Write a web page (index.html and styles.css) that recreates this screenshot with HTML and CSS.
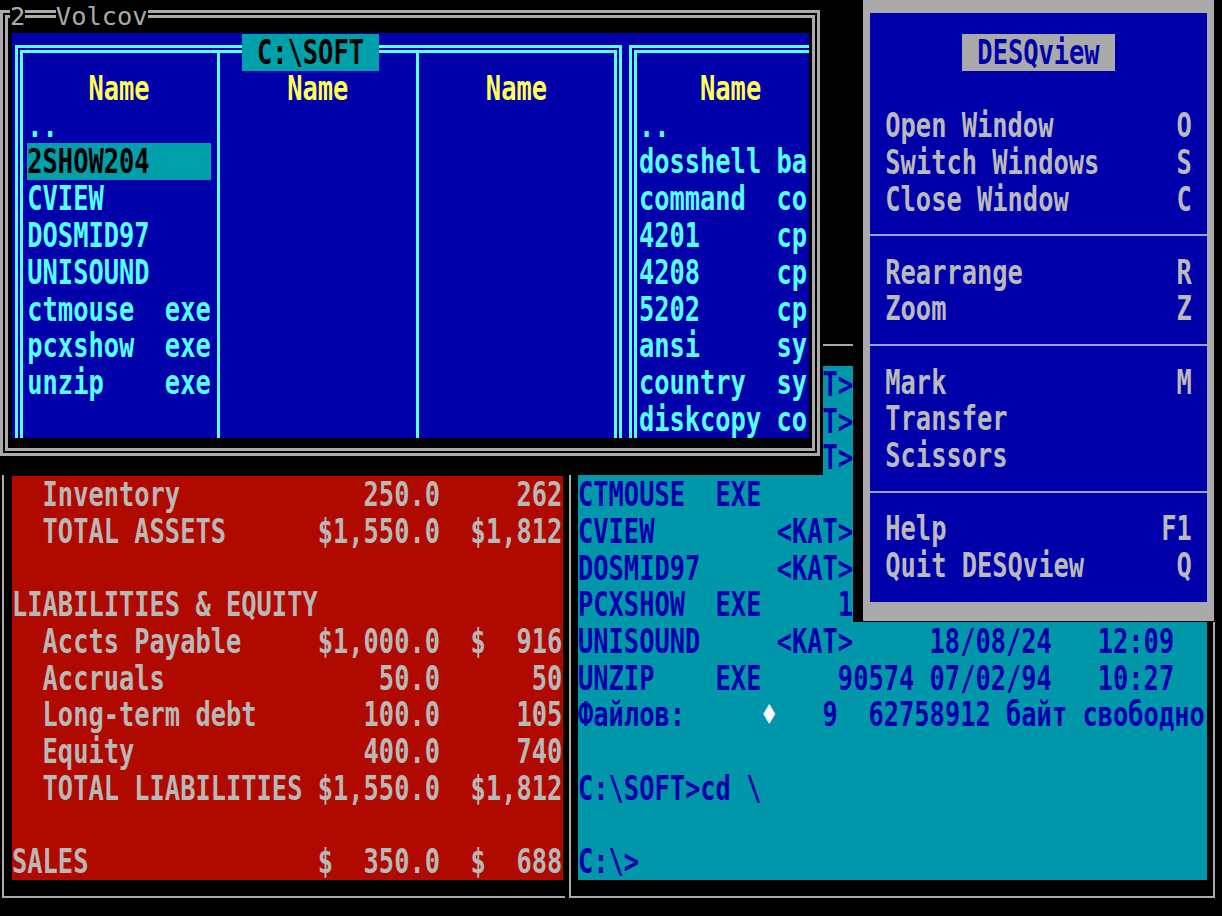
FILE: index.html
```html
<!DOCTYPE html>
<html lang="ru">
<head>
<meta charset="utf-8">
<title>DESQview</title>
<link rel="stylesheet" href="styles.css">
</head>
<body>
<div class="screen">

  <section class="win sheet">
    <div class="frame">
      <div class="pane">
        <div class="r">  Inventory            250.0     262</div>
        <div class="r">  TOTAL ASSETS      $1,550.0  $1,812</div>
        <div class="r"></div>
        <div class="r">LIABILITIES &amp; EQUITY</div>
        <div class="r">  Accts Payable     $1,000.0  $  916</div>
        <div class="r">  Accruals              50.0      50</div>
        <div class="r">  Long-term debt       100.0     105</div>
        <div class="r">  Equity               400.0     740</div>
        <div class="r">  TOTAL LIABILITIES $1,550.0  $1,812</div>
        <div class="r"></div>
        <div class="r">SALES               $  350.0  $  688</div>
      </div>
    </div>
  </section>

  <section class="win dos">
    <div class="frame">
      <div class="pane">
        <div class="r ind">T&gt;</div>
        <div class="r ind">T&gt;</div>
        <div class="r ind">T&gt;</div>
        <div class="r">CTMOUSE  EXE</div>
        <div class="r">CVIEW        &lt;КАТ&gt;</div>
        <div class="r">DOSMID97     &lt;КАТ&gt;</div>
        <div class="r">PCXSHOW  EXE     1</div>
        <div class="r">UNISOUND     &lt;КАТ&gt;     18/08/24   12:09</div>
        <div class="r">UNZIP    EXE     90574 07/02/94   10:27</div>
        <div class="r">Файлов:     <span class="ptr">♦</span>   9  62758912 байт свободно</div>
        <div class="r"></div>
        <div class="r">C:\SOFT&gt;cd \</div>
        <div class="r"></div>
        <div class="r">C:\&gt;</div>
      </div>
    </div>
  </section>

  <section class="win vc">
    <div class="frame">
      <div class="pane">
        <div class="panel left">
          <div class="label"><div class="r">C:\SOFT</div></div>
          <div class="col">
            <div class="r head">    Name</div>
            <div class="r">..</div>
            <div class="sel"><div class="r">2SHOW204</div></div>
            <div class="r">CVIEW</div>
            <div class="r">DOSMID97</div>
            <div class="r">UNISOUND</div>
            <div class="r">ctmouse  exe</div>
            <div class="r">pcxshow  exe</div>
            <div class="r">unzip    exe</div>
          </div>
          <div class="sep"></div>
          <div class="col">
            <div class="r head">    Name</div>
          </div>
          <div class="sep"></div>
          <div class="col">
            <div class="r head">    Name</div>
          </div>
        </div>
        <div class="panel right">
          <div class="r head">    Name</div>
          <div class="r">..</div>
          <div class="r">dosshell ba</div>
          <div class="r">command  co</div>
          <div class="r">4201     cp</div>
          <div class="r">4208     cp</div>
          <div class="r">5202     cp</div>
          <div class="r">ansi     sy</div>
          <div class="r">country  sy</div>
          <div class="r">diskcopy co</div>
        </div>
      </div>
    </div>
    <div class="title"><span>2</span><span class="gap"></span><span>Volcov</span></div>
  </section>

  <section class="win menu">
    <div class="menu-frame">
      <div class="menu-body">
        <div class="mtitle"><div class="box"><div class="r">DESQview</div></div></div>
        <div class="blank"></div>
        <div class="r item"><span>Open Window</span><span>O</span></div>
        <div class="r item"><span>Switch Windows</span><span>S</span></div>
        <div class="r item"><span>Close Window</span><span>C</span></div>
        <div class="rule"></div>
        <div class="r item"><span>Rearrange</span><span>R</span></div>
        <div class="r item"><span>Zoom</span><span>Z</span></div>
        <div class="rule"></div>
        <div class="r item"><span>Mark</span><span>M</span></div>
        <div class="r item"><span>Transfer</span></div>
        <div class="r item"><span>Scissors</span></div>
        <div class="rule"></div>
        <div class="r item"><span>Help</span><span>F1</span></div>
        <div class="r item"><span>Quit DESQview</span><span>Q</span></div>
      </div>
    </div>
  </section>

</div>
</body>
</html>
```

FILE: styles.css
```css
* {
  box-sizing: border-box;
  margin: 0;
  padding: 0;
}

html,
body {
  background: #000;
}

body {
  width: 1222px;
  height: 916px;
  overflow: hidden;
  font-family: "DejaVu Sans Mono", "Liberation Mono", monospace;
  font-size: 25.4px;
  font-weight: bold;
  --sy: 1.3;
}

.screen {
  position: relative;
  width: 1222px;
  height: 916px;
  background: #000;
}

.win {
  position: absolute;
  background: #000;
}

.r {
  height: var(--rh);
  line-height: var(--rh);
  white-space: pre;
  transform: scaleY(var(--sy));
}

/* ---------- spreadsheet window (red) ---------- */
.sheet {
  left: 0;
  top: 440px;
  width: 565px;
  height: 476px;
  --rh: 36.73px;
}

.sheet .frame {
  margin: 18px 0 0 2px;
  width: 572px;
  height: 440px;
  border: 2px solid #aaa;
  padding: 16px 0 16px 8px;
}

.sheet .pane {
  width: 551px;
  height: 404px;
  background: #b00a00;
  color: #b8b8b8;
}

/* ---------- DOS prompt window (cyan) ---------- */
.dos {
  left: 565px;
  top: 330px;
  width: 657px;
  height: 586px;
  --rh: 36.71px;
}

.dos .frame {
  margin: 14px 0 0 4px;
  width: 646px;
  height: 554px;
  border: 2px solid #aaa;
  padding: 20px 6px 16px 7px;
}

.dos .pane {
  height: 514px;
  background: #0097aa;
  color: #0000aa;
}

.ind {
  padding-left: 16ch;
}

.ptr {
  color: #fff;
}

/* ---------- Volkov Commander window ---------- */
.vc {
  left: 0;
  top: 0;
  width: 823px;
  height: 475px;
  --rh: 36.8px;
}

.vc .frame {
  margin-top: 10px;
  width: 820px;
  height: 446px;
  border: 8px double #aaa;
  padding: 15px 3px 10px 4px;
}

.vc .pane {
  height: 405px;
  background: #0000aa;
  color: #55ffff;
  overflow: hidden;
  display: flex;
  align-items: flex-start;
}

.panel {
  flex: none;
  position: relative;
  margin-top: 12px;
  height: 420px;
  border: 8px double #55ffff;
  border-bottom: 0;
}

.panel.left {
  margin-left: 3px;
  width: 607px;
  display: grid;
  grid-template-columns: 12ch 1ch 12ch 1ch 12ch;
  padding-left: 4.3px;
}

.col {
  padding-top: 16.8px;
}

.sep {
  background: linear-gradient(#55ffff, #55ffff) center / 3px 100% no-repeat;
}

.panel.right {
  margin-left: 7px;
  width: 180px;
  border-right: 0;
  padding: 16.8px 0 0 1.9px;
}

.head {
  color: #ffff55;
}

.sel {
  height: var(--rh);
  background: #00a0aa;
  color: #000;
}

.label {
  position: absolute;
  left: 218.7px;
  top: -19px;
  width: 9ch;
  height: 36.6px;
  background: #00a0aa;
  color: #000;
  text-align: center;
  --rh: 36.6px;
}

.title {
  position: absolute;
  left: 10px;
  top: 0;
  display: flex;
  color: #aaa;
  font-weight: normal;
}

.title span {
  height: 33px;
  line-height: 33px;
  background: #000;
  white-space: pre;
}

.title .gap {
  width: 2ch;
  background: transparent;
}

/* ---------- DESQview menu ---------- */
.menu {
  left: 853px;
  top: 0;
  width: 369px;
  height: 622px;
  --rh: 36.64px;
}

.menu-frame {
  margin-left: 10px;
  width: 351px;
  height: 621px;
  background: #aaa;
  padding: 13px 7px 19px;
}

.menu-body {
  height: 589px;
  background: #0000aa;
  padding-top: 21px;
  color: #bababa;
}

.mtitle {
  height: var(--rh);
  display: flex;
  justify-content: center;
}

.mtitle .box {
  width: 10ch;
  height: var(--rh);
  background: #aaa;
  color: #0000aa;
  text-align: center;
}

.blank {
  height: var(--rh);
}

.item {
  display: flex;
  justify-content: space-between;
  padding: 0 1ch;
}

.rule {
  height: var(--rh);
  background: linear-gradient(#9fa0d0, #9fa0d0) center / 100% 2px no-repeat;
}
```
